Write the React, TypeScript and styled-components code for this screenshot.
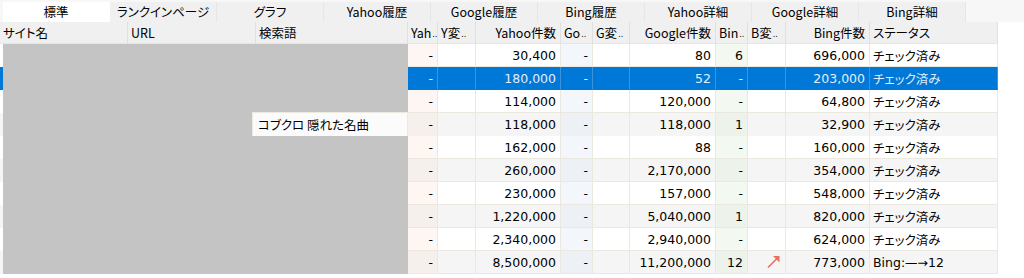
import React from "react";
import styled, { createGlobalStyle } from "styled-components";

const GlobalStyle = createGlobalStyle`
  html, body {
    margin: 0;
    padding: 0;
    background: #ffffff;
  }
  body {
    font-family: "Noto Sans CJK JP", sans-serif;
    color: #000;
  }
`;

const COLUMNS =
  "128px 128px 152px 30px 38px 85px 32px 37px 86px 32px 38px 84px 128px";

type Tint = "none" | "yahoo" | "google" | "bing";

const TINTS: Record<Tint, [string, string]> = {
  none: ["#ffffff", "#f5f5f5"],
  yahoo: ["#fdf6f2", "#f6f0ec"],
  google: ["#f3f6fb", "#edf0f5"],
  bing: ["#f3f9f0", "#edf3ea"],
};

const Page = styled.div`
  width: 1024px;
  height: 278px;
  overflow: hidden;
  background: #ffffff;
`;

const TabBar = styled.div`
  display: flex;
  height: 22px;
  padding-left: 3px;
  background: #f7f7f7;
`;

const Tab = styled.div<{ $active?: boolean }>`
  width: 106px;
  margin-top: 2px;
  border-right: 1px solid ${(p) => (p.$active ? "#ffffff" : "#e6e6e6")};
  background: ${(p) => (p.$active ? "#ffffff" : "#f0f0f0")};
  display: flex;
  align-items: center;
  justify-content: center;
  font-size: 12.5px;
  font-feature-settings: "palt";
  line-height: 1;
  color: #000;
`;

const Header = styled.div`
  display: grid;
  grid-template-columns: ${COLUMNS};
  width: 998px;
  height: 22px;
  background: #f0f0f0;
  border-bottom: 1px solid #e8e5dc;
  box-sizing: border-box;
`;

const HeadCell = styled.div<{ $right?: boolean }>`
  display: flex;
  align-items: center;
  justify-content: ${(p) => (p.$right ? "flex-end" : "flex-start")};
  padding: 0 4px 0 3px;
  border-right: 1px solid #e0e0e0;
  font-size: 12.5px;
  font-feature-settings: "palt";
  white-space: nowrap;
  overflow: hidden;
  color: #000;
`;

const Dots = styled.span`
  font-family: "DejaVu Sans", sans-serif;
  font-size: 8px;
  align-self: flex-end;
  margin: 0 0 4px 1px;
  line-height: 1;
`;

const Row = styled.div<{ $striped: boolean; $selected: boolean }>`
  display: grid;
  grid-template-columns: ${COLUMNS};
  width: 998px;
  height: 23px;
  background: ${(p) =>
    p.$selected ? "#0078d7" : p.$striped ? "#f5f5f5" : "#ffffff"};
`;

const Cell = styled.div<{
  $align?: "left" | "right";
  $tint?: Tint;
  $striped: boolean;
  $selected: boolean;
}>`
  display: flex;
  align-items: center;
  justify-content: ${(p) => (p.$align === "left" ? "flex-start" : "flex-end")};
  padding: 0 4px 0 3px;
  box-sizing: border-box;
  border-right: 1px solid
    ${(p) => (p.$selected ? "#3b93dc" : "#ebe8df")};
  border-bottom: 1px solid
    ${(p) => (p.$selected ? "#0078d7" : "#ebe8df")};
  background: ${(p) =>
    p.$selected ? "#0078d7" : TINTS[p.$tint ?? "none"][p.$striped ? 1 : 0]};
  color: ${(p) => (p.$selected ? "#e4eefa" : "#000")};
  font-family: "DejaVu Sans", "Noto Sans CJK JP", sans-serif;
  font-size: 12.5px;
  font-feature-settings: "palt";
  white-space: nowrap;
`;

const StatusText = styled.span`
  font-family: "Noto Sans CJK JP", sans-serif;
  font-size: 12.5px;
  font-feature-settings: "palt";
`;

const Redacted = styled.div`
  grid-column: 1 / 4;
  margin-left: 3px;
  background: #c4c4c4;
  display: flex;
  justify-content: flex-end;
`;

const Peek = styled.div`
  width: 156px;
  height: 25px;
  margin-top: -1px;
  box-sizing: border-box;
  border: 1px solid #ece9e1;
  background: #fbfbfb;
  display: flex;
  align-items: center;
  padding-left: 5px;
  font-size: 12.5px;
  font-feature-settings: "palt";
  color: #000;
`;

const tabs = [
  "標準",
  "ランクインページ",
  "グラフ",
  "Yahoo履歴",
  "Google履歴",
  "Bing履歴",
  "Yahoo詳細",
  "Google詳細",
  "Bing詳細",
];

interface RowData {
  yahoo: string;
  google: string;
  bingRank: string;
  bing: string;
  status: string;
  up?: boolean;
  keyword?: string;
}

const rows: RowData[] = [
  { yahoo: "30,400", google: "80", bingRank: "6", bing: "696,000", status: "チェック済み" },
  { yahoo: "180,000", google: "52", bingRank: "-", bing: "203,000", status: "チェック済み" },
  { yahoo: "114,000", google: "120,000", bingRank: "-", bing: "64,800", status: "チェック済み" },
  { yahoo: "118,000", google: "118,000", bingRank: "1", bing: "32,900", status: "チェック済み", keyword: "コブクロ 隠れた名曲" },
  { yahoo: "162,000", google: "88", bingRank: "-", bing: "160,000", status: "チェック済み" },
  { yahoo: "260,000", google: "2,170,000", bingRank: "-", bing: "354,000", status: "チェック済み" },
  { yahoo: "230,000", google: "157,000", bingRank: "-", bing: "548,000", status: "チェック済み" },
  { yahoo: "1,220,000", google: "5,040,000", bingRank: "1", bing: "820,000", status: "チェック済み" },
  { yahoo: "2,340,000", google: "2,940,000", bingRank: "-", bing: "624,000", status: "チェック済み" },
  { yahoo: "8,500,000", google: "11,200,000", bingRank: "12", bing: "773,000", status: "Bing:—→12", up: true },
];

const SELECTED = 1;

function UpArrow() {
  return (
    <svg width="15" height="14" viewBox="0 0 15 14">
      <line x1="2" y1="12.5" x2="12" y2="2.5" stroke="#e8715f" strokeWidth="1.6" />
      <polygon points="13.5,1 13.5,7.5 7,1" fill="#e8715f" />
    </svg>
  );
}

function Short({ label }: { label: string }) {
  return (
    <HeadCell>
      {label}
      <Dots>..</Dots>
    </HeadCell>
  );
}

function DataRow({ row, index }: { row: RowData; index: number }) {
  const striped = index % 2 === 1;
  const selected = index === SELECTED;
  const c = { $striped: striped, $selected: selected };
  return (
    <Row {...c}>
      <Redacted>{row.keyword && <Peek>{row.keyword}</Peek>}</Redacted>
      <Cell {...c} $tint="yahoo">-</Cell>
      <Cell {...c} />
      <Cell {...c}>{row.yahoo}</Cell>
      <Cell {...c} $tint="google">-</Cell>
      <Cell {...c} />
      <Cell {...c}>{row.google}</Cell>
      <Cell {...c} $tint="bing">{row.bingRank}</Cell>
      <Cell {...c}>{row.up && <UpArrow />}</Cell>
      <Cell {...c}>{row.bing}</Cell>
      <Cell {...c} $align="left">
        {row.up ? row.status : <StatusText>{row.status}</StatusText>}
      </Cell>
    </Row>
  );
}

export default function App() {
  return (
    <Page>
      <GlobalStyle />
      <TabBar>
        {tabs.map((t, i) => (
          <Tab key={t} $active={i === 0}>
            {t}
          </Tab>
        ))}
      </TabBar>
      <Header>
        <HeadCell>サイト名</HeadCell>
        <HeadCell>URL</HeadCell>
        <HeadCell>検索語</HeadCell>
        <Short label="Yah" />
        <Short label="Y変" />
        <HeadCell $right>Yahoo件数</HeadCell>
        <Short label="Go" />
        <Short label="G変" />
        <HeadCell $right>Google件数</HeadCell>
        <Short label="Bin" />
        <Short label="B変" />
        <HeadCell $right>Bing件数</HeadCell>
        <HeadCell>ステータス</HeadCell>
      </Header>
      {rows.map((r, i) => (
        <DataRow key={i} row={r} index={i} />
      ))}
    </Page>
  );
}
